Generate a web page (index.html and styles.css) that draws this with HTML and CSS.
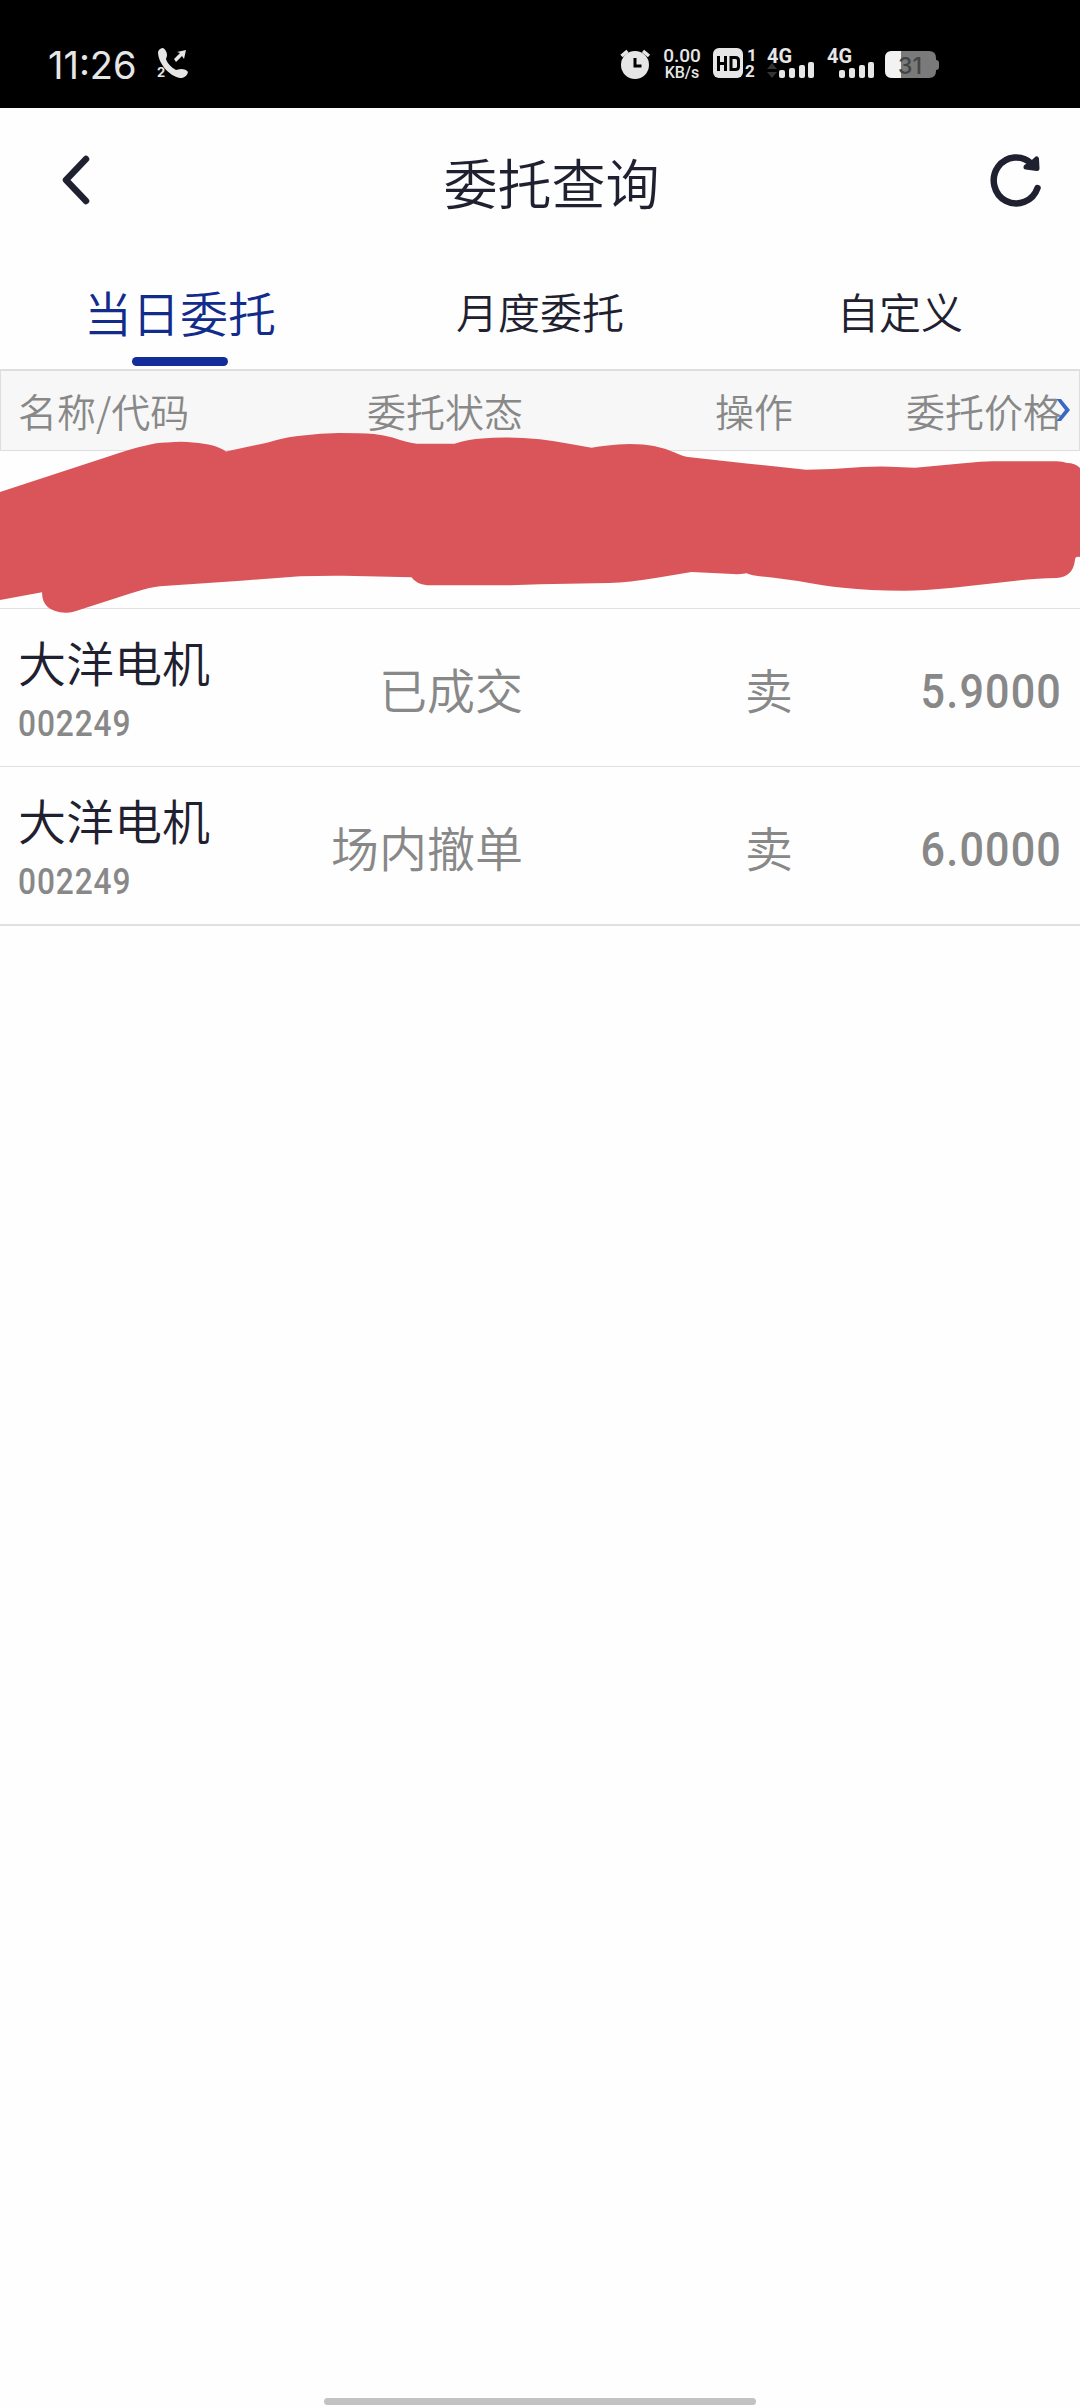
FILE: index.html
```
<!DOCTYPE html>
<html lang="zh-CN">
<head>
    <meta charset="utf-8">
    <title>委托查询</title>
    <link rel="stylesheet" href="styles.css">
</head>
<body>

    <!-- Status bar -->
    <div class="status-bar">
        <span class="time">11:26</span>
        <svg class="call-icon" width="32" height="31" viewBox="0 0 32 31">
            <path d="M1 4C2 1 4 0 6 0c2 1 4 4 4 7 0 2-1 3-1 4 1 4 6 9 10 11 1 0 3-1 5-1 3 0 6 1 7 3-1 4-4 6-8 6C12 28 1 15 1 4z"/>
            <path d="M17 11l6-6-3-1 9-2-2 9-2-3-6 6z"/>
            <text x="0" y="29" class="call-num">2</text>
        </svg>

        <div class="status-icons">
            <svg width="32" height="31" viewBox="0 0 32 31">
                <circle cx="15" cy="17" r="14"/>
                <path class="line" d="M1.500 8l6-5M23 3l6 5"/>
                <path class="cut" d="M15 10v8h6.500"/>
            </svg>
            <div class="speed">
                <span>0.00</span>
                <span class="unit">KB/s</span>
            </div>
            <svg width="44" height="31" viewBox="0 0 44 31">
                <rect width="30" height="30" rx="6"/>
                <path class="cut hd" d="M5.500 8v15M12.500 8v15M5.500 15.500h7M18 9.500h4.500q3 0 3 3v6q0 3-3 3H18z"/>
                <text x="34" y="12.500" class="sim">1</text>
                <text x="32" y="29" class="sim">2</text>
            </svg>
            <svg class="sim-one" width="48" height="31" viewBox="0 0 48 31">
                <text x="0" y="15" class="net">4G</text>
                <path class="dim" d="M0 21l5-6 5 6zM0 24h10l-5 6z"/>
                <rect x="12" y="22" width="6" height="8" rx="2"/>
                <rect x="22" y="20" width="6" height="10" rx="2"/>
                <rect x="32" y="17" width="6" height="13" rx="2"/>
                <rect x="41" y="14" width="6" height="16" rx="2"/>
            </svg>
            <svg width="48" height="31" viewBox="0 0 48 31">
                <text x="0" y="15" class="net">4G</text>
                <rect x="12" y="22" width="6" height="8" rx="2"/>
                <rect x="22" y="20" width="6" height="10" rx="2"/>
                <rect x="32" y="17" width="6" height="13" rx="2"/>
                <rect x="41" y="14" width="6" height="16" rx="2"/>
            </svg>
            <svg width="54" height="31" viewBox="0 0 54 31">
                <path class="battery" d="M7 3h37q7 0 7 7v2q3 0 3 3v4q0 3-3 3v1q0 7-7 7H7q-7 0-7-7V10q0-7 7-7z"/>
                <path class="charge" d="M7 3h9v27H7q-7 0-7-7V10q0-7 7-7z"/>
                <text x="13" y="26" class="percent">31</text>
            </svg>
        </div>
    </div>

    <!-- Title bar -->
    <div class="nav">
        <svg width="28" height="50" viewBox="0 0 28 50">
            <path d="M24 4L4 25l20 21"/>
        </svg>
        <h1>委托查询</h1>
        <svg width="50" height="52" viewBox="0 0 50 52">
            <path d="M46.500 34A22.500 23 0 1 1 41 10"/>
            <path class="arrow" d="M45.500 5l.5 9.500-11-1.500 5-3z"/>
        </svg>
    </div>

    <!-- Tabs -->
    <div class="tabs">
        <div class="tab active">当日委托</div>
        <div class="tab">月度委托</div>
        <div class="tab">自定义</div>
    </div>

    <!-- Order list -->
    <div class="orders">
        <div class="row head">
            <div class="name">名称/代码</div>
            <div class="state">委托状态</div>
            <div class="action">操作</div>
            <div class="price">委托价格</div>
            <svg class="more" width="16" height="24" viewBox="0 0 16 24">
                <path d="M1.500 1h4.500l9 11-9 11H1.500l8.500-11z"/>
            </svg>
        </div>
        <div class="row">
            <svg class="scribble" width="1080" height="190" viewBox="0 428 1080 190">
                <path d="M0 492L110 456Q151 442 167 442.500Q182 441 193 442.500Q216 444 226 451.500L267 442.700Q290 436 303 435.500Q320 433 339 433Q360 433 374 434Q384 435 392.500 437.600Q408 443 417 443.700H454.500Q470 439 482 438.500Q506 436 540 439.300Q555 441 567.500 443.500L591.600 447.700Q605 445 629.500 444Q644 444 654 446Q664 448 674 452.300Q683 456.500 688 457L746.600 463.500L806 469.700Q825 469.700 840 468.600Q870 466 890 466.700L915 467.700L963.500 463.300Q985 461 994.500 461.300H1056.500Q1063 461.500 1067 463Q1075 463 1080 468V557Q1075 556 1075 560Q1073 577 1056.500 578Q1035 578 1005 582L953 587.700Q920 591 902 590.700Q870 590.500 843 587.700Q825 586 798 581L774 577.700Q752 576 746.600 573.300Q738 574.500 733 574L691.500 572L654 578.300Q630 582.500 609 583L540 584.300L510 585.300H427Q416 584 411.500 577.300L344 575.700Q320 575.500 300 576.300L241 580.700L160 586.300Q151 587 131 593.300L76 611Q71 613 65.400 612.700Q42 612 42 592.300L0 600z"/>
            </svg>
        </div>
        <div class="row">
            <div class="name">大洋电机<span class="code">002249</span></div>
            <div class="state">已成交</div>
            <div class="action">卖</div>
            <div class="price num">5.9000</div>
        </div>
        <div class="row">
            <div class="name">大洋电机<span class="code">002249</span></div>
            <div class="state">场内撤单</div>
            <div class="action">卖</div>
            <div class="price num">6.0000</div>
        </div>
    </div>

    <div class="home-bar"></div>
</body>
</html>
```
FILE: styles.css
```
* {
    box-sizing: border-box;
}

body {
    margin: 0;
    height: 2408px;
    display: flex;
    flex-direction: column;
    background-color: #fefefe;
    color: #1f2130;
    font-family: "Noto Sans CJK SC", sans-serif;
    font-weight: 350;
    overflow: hidden;
}

svg {
    display: block;
    flex: none;
    overflow: visible;
}

/* Status bar */
.status-bar {
    height: 108px;
    padding: 19px 141px 0 48px;
    display: flex;
    align-items: center;
    background-color: #000;
    color: #e6e6e6;
    fill: #e6e6e6;
    font-family: Inter, sans-serif;
}

.time {
    width: 92px;
    margin-right: 17px;
    padding-top: 2px;
    font-size: 38px;
    font-weight: 400;
    line-height: 44px;
    white-space: nowrap;
}

.call-num {
    font-size: 13px;
    font-weight: 700;
}

.status-icons {
    margin-left: auto;
    display: flex;
    align-items: center;
    gap: 10px;
}

.sim-one {
    margin-right: 2px;
}

.speed {
    width: 38px;
    margin: 0 2px 0 1px;
    display: flex;
    flex-direction: column;
    align-items: center;
    font-family: Roboto, sans-serif;
    font-size: 19px;
    font-weight: 500;
    line-height: 17px;
    white-space: nowrap;
}

.unit {
    font-size: 16px;
}

.line {
    fill: none;
    stroke: #e6e6e6;
    stroke-width: 3.5;
}

.cut {
    fill: none;
    stroke: #000;
    stroke-width: 3;
}

.sim {
    font-family: Roboto, sans-serif;
    font-size: 17px;
    font-weight: 700;
}

.net {
    font-family: Roboto, sans-serif;
    font-size: 20px;
    font-weight: 700;
}

.dim {
    fill: #333;
}

.battery {
    fill: #7a7a7a;
}

.charge {
    fill: #f2f2f2;
}

.percent {
    fill: #444;
    font-size: 23px;
    font-weight: 500;
}

/* Title bar */
.nav {
    height: 144px;
    padding: 0 39px 0 62px;
    display: flex;
    align-items: center;
}

.nav h1 {
    flex: 1;
    margin: 0;
    padding-top: 3px;
    text-align: center;
    text-indent: 22px;
    font-size: 54px;
    font-weight: 350;
    line-height: 80px;
}

.nav path {
    fill: none;
    stroke: #1f2130;
    stroke-width: 6.5;
    stroke-linecap: round;
    stroke-linejoin: round;
}

.nav .arrow {
    fill: #1f2130;
    stroke-width: 5;
}

/* Tabs */
.tabs {
    height: 118px;
    display: flex;
    border-bottom: 1px solid #dedede;
}

.tab {
    position: relative;
    flex: 1;
    padding-top: 23px;
    text-align: center;
    font-size: 42px;
    line-height: 72px;
}

.tab.active {
    color: #122c8c;
    font-size: 48px;
}

.tab.active::after {
    content: "";
    position: absolute;
    left: 132px;
    bottom: 3px;
    width: 96px;
    height: 9px;
    border-radius: 5px;
    background-color: #122c99;
}

/* Order list */
.orders {
    border-bottom: 1px solid #e0e0e0;
}

.row {
    position: relative;
    height: 158px;
    padding: 0 18px;
    display: flex;
    align-items: center;
    border-bottom: 1px solid #e0e0e0;
    color: #888;
    font-size: 48px;
    line-height: 60px;
}

.row.head {
    height: 81px;
    padding: 0 17px 2px;
    border: 1px solid #dedede;
    background-color: #f7f7f7;
    font-size: 39px;
}

.name {
    width: 235px;
    padding-top: 10px;
    color: #1f2130;
}

.head .name {
    padding-top: 0;
    color: #888;
}

.code {
    display: block;
    padding-top: 3px;
    color: #888;
    font-family: Roboto, sans-serif;
    font-size: 36px;
    font-weight: 500;
    letter-spacing: 1px;
    transform: scaleX(0.88);
    transform-origin: left;
}

.state {
    width: 270px;
    text-align: right;
}

.action {
    width: 270px;
    text-align: right;
}

.price {
    flex: 1;
    text-align: right;
}

.num {
    padding-top: 8px;
    font-family: Roboto, sans-serif;
    font-size: 49px;
    font-weight: 500;
    letter-spacing: 1.3px;
    transform: scaleX(0.88);
    transform-origin: right;
}

.more {
    position: absolute;
    right: 8px;
    top: 27px;
    fill: #3a68c4;
}

/* Red marker over the first order */
.scribble {
    position: absolute;
    left: 0;
    top: -23px;
    fill: #da555a;
}

.home-bar {
    width: 432px;
    height: 7px;
    margin: auto auto 3px;
    border-radius: 4px;
    background-color: #c2c2c2;
}
```
